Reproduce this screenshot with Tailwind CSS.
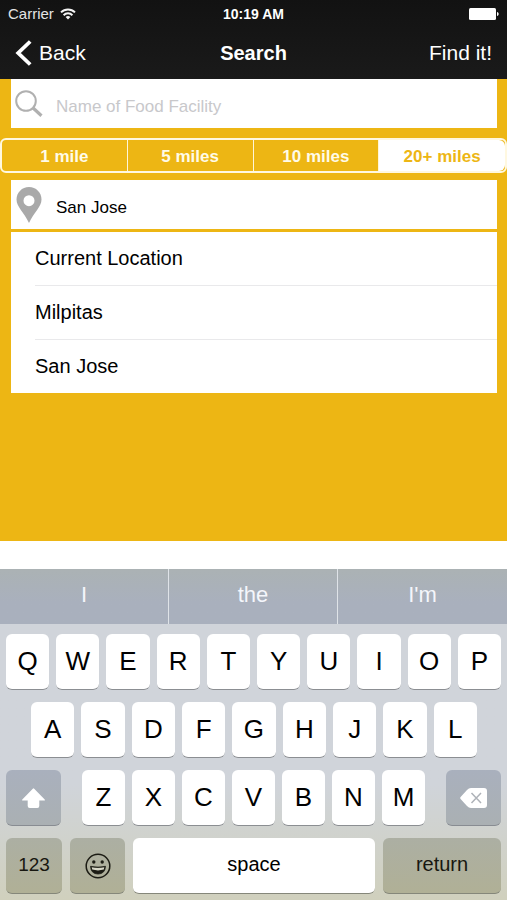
<!DOCTYPE html>
<html lang="en">
<head>
<meta charset="utf-8">
<meta name="viewport" content="width=device-width, initial-scale=1">
<title>Search</title>
<script src="https://cdn.jsdelivr.net/npm/@tailwindcss/browser@4"></script>
</head>
<body class="flex min-h-screen flex-col bg-white font-['Liberation_Sans',Arial,sans-serif] text-black">

<header class="bg-linear-to-b from-[#121212] to-[#1a1a1a] text-white">
  <div class="grid h-7 grid-cols-3 items-center px-2">
    <div class="flex items-center gap-1.5 text-[15px] text-[#e4e4e4]">
      <span>Carrier</span>
      <svg class="h-3 w-4" viewBox="0 0 16 12" fill="none" stroke="#f4f4f4" stroke-width="2" aria-hidden="true">
        <path d="M1 4.4a10 10 0 0 1 14 0"/><path d="M3.6 7.2a6.2 6.2 0 0 1 8.8 0"/><path d="M8 11.6 5.6 9.1a3.4 3.4 0 0 1 4.8 0z" fill="#f4f4f4" stroke="none"/>
      </svg>
    </div>
    <div class="text-center text-sm font-bold">10:19 AM</div>
    <svg class="h-3 w-[30px] justify-self-end" viewBox="0 0 30 12" fill="#fff" aria-label="Battery full">
      <rect width="27" height="12" rx="1.5"/><path d="M28 4c2.2.4 2.2 3.6 0 4z"/>
    </svg>
  </div>
  <nav class="grid grid-cols-3 items-center px-[15px] pt-[5px] pb-1.5 leading-10">
    <button class="flex items-center gap-[7px] text-[21px]">
      <svg class="h-[26px] w-[17px]" viewBox="0 0 17 26" fill="none" stroke="#fff" stroke-width="3.8" aria-hidden="true"><path d="M15.2 1.5 3.2 13l12 11.5"/></svg>
      Back
    </button>
    <h1 class="text-center text-xl leading-10 font-bold">Search</h1>
    <button class="justify-self-end text-[21px]">Find it!</button>
  </nav>
</header>

<main class="flex-1 bg-[#edb614]">
  <label class="mx-[10px] ml-[11px] flex h-[49px] items-center gap-3 bg-white pl-1">
    <svg class="size-7 shrink-0" viewBox="0 0 28 28" fill="none" stroke="#b0b0b0" aria-hidden="true"><circle cx="11" cy="11" r="9.8" stroke-width="2"/><path d="m17.8 17.8 8.700 8" stroke-width="3.2"/></svg>
    <input type="text" aria-label="Name of Food Facility" placeholder="Name of Food Facility" class="mt-1.5 min-w-0 flex-1 pl-px text-[17px] outline-none placeholder:text-[#c8c8cb]">
  </label>

  <fieldset aria-label="Distance" class="mt-[10px] grid h-[35px] grid-cols-4 divide-x divide-[#fff6d8] overflow-hidden rounded-md border-2 border-[#fff8e0] text-center text-[17px] leading-[33px] font-bold text-[#fffbe8]">
    <label class="has-checked:bg-white has-checked:text-[#edb614]"><input type="radio" name="distance" class="absolute appearance-none">1 mile</label>
    <label class="has-checked:bg-white has-checked:text-[#edb614]"><input type="radio" name="distance" class="absolute appearance-none">5 miles</label>
    <label class="has-checked:bg-white has-checked:text-[#edb614]"><input type="radio" name="distance" class="absolute appearance-none">10 miles</label>
    <label class="has-checked:bg-white has-checked:text-[#edb614]"><input type="radio" name="distance" class="absolute appearance-none" checked>20+ miles</label>
  </fieldset>

  <label class="mt-[7px] mr-[10px] ml-[11px] flex h-[49px] items-center gap-3 bg-white pl-1">
    <svg class="h-9 w-7 shrink-0" viewBox="0 0 28 36" aria-hidden="true"><path fill="#a9a9a9" fill-rule="evenodd" d="M14 0C7 0 1.500 5.500 1.500 12.500 1.500 20 9 25 14 36 19 25 26.500 20 26.500 12.500 26.500 5.500 21 0 14 0zM14 8.200a5.500 5.500 0 1 1 0 11 5.500 5.500 0 0 1 0-11z"/></svg>
    <input type="text" aria-label="Location" value="San Jose" class="mt-1.5 min-w-0 flex-1 pl-px text-[17px] outline-none">
  </label>

  <ul class="mt-[3px] mr-[10px] ml-[11px] bg-white pl-6 text-xl leading-[53px]">
    <li class="border-b border-[#e9e9eb]"><button class="w-full text-left">Current Location</button></li>
    <li class="border-b border-[#e9e9eb]"><button class="w-full text-left">Milpitas</button></li>
    <li><button class="w-full text-left">San Jose</button></li>
  </ul>
</main>

<div class="h-7 bg-white"></div>

<section aria-label="Keyboard" class="bg-linear-to-b from-[#d0d4da] from-65% to-[#d0d0bd]">
  <div class="grid h-[55px] grid-cols-3 divide-x divide-[#dfe3e8] bg-linear-to-b from-[#abb2b4] to-[#a9b0bd] to-60% text-[22px] text-[#f4f6fb]">
    <button class="pb-1">I</button><button class="pb-1">the</button><button class="pb-1">I'm</button>
  </div>
  <div class="flex flex-col gap-3 px-1.5 pt-[10px] pb-1.5 text-[26px]">
    <div class="flex h-14 gap-[7px]">
      <button class="flex-1 rounded-md border-b border-[#8b8e92] bg-white">Q</button>
      <button class="flex-1 rounded-md border-b border-[#8b8e92] bg-white">W</button>
      <button class="flex-1 rounded-md border-b border-[#8b8e92] bg-white">E</button>
      <button class="flex-1 rounded-md border-b border-[#8b8e92] bg-white">R</button>
      <button class="flex-1 rounded-md border-b border-[#8b8e92] bg-white">T</button>
      <button class="flex-1 rounded-md border-b border-[#8b8e92] bg-white">Y</button>
      <button class="flex-1 rounded-md border-b border-[#8b8e92] bg-white">U</button>
      <button class="flex-1 rounded-md border-b border-[#8b8e92] bg-white">I</button>
      <button class="flex-1 rounded-md border-b border-[#8b8e92] bg-white">O</button>
      <button class="flex-1 rounded-md border-b border-[#8b8e92] bg-white">P</button>
    </div>
    <div class="flex h-14 gap-[7px] pr-6 pl-[25px]">
      <button class="flex-1 rounded-md border-b border-[#8b8e92] bg-white">A</button>
      <button class="flex-1 rounded-md border-b border-[#8b8e92] bg-white">S</button>
      <button class="flex-1 rounded-md border-b border-[#8b8e92] bg-white">D</button>
      <button class="flex-1 rounded-md border-b border-[#8b8e92] bg-white">F</button>
      <button class="flex-1 rounded-md border-b border-[#8b8e92] bg-white">G</button>
      <button class="flex-1 rounded-md border-b border-[#8b8e92] bg-white">H</button>
      <button class="flex-1 rounded-md border-b border-[#8b8e92] bg-white">J</button>
      <button class="flex-1 rounded-md border-b border-[#8b8e92] bg-white">K</button>
      <button class="flex-1 rounded-md border-b border-[#8b8e92] bg-white">L</button>
    </div>
    <div class="flex h-14 gap-[21px]">
      <button aria-label="Shift" class="flex w-[55px] items-center justify-center rounded-md border-b border-[#888c92] bg-linear-to-b from-[#a9b0bd] to-[#aab0b3]">
        <svg class="h-5 w-[23px]" viewBox="0 0 23 20" fill="#fff" aria-hidden="true"><path d="M10.800.7Q11.500 0 12.200.7L22.700 11.600Q23.300 12.600 22.200 12.600H17.300V18Q17.300 20 15.300 20H7.700Q5.700 20 5.700 18V12.600H.8Q-.3 12.600.3 11.600z"/></svg>
      </button>
      <div class="flex flex-1 gap-[7px]">
        <button class="flex-1 rounded-md border-b border-[#8b8e92] bg-white">Z</button>
        <button class="flex-1 rounded-md border-b border-[#8b8e92] bg-white">X</button>
        <button class="flex-1 rounded-md border-b border-[#8b8e92] bg-white">C</button>
        <button class="flex-1 rounded-md border-b border-[#8b8e92] bg-white">V</button>
        <button class="flex-1 rounded-md border-b border-[#8b8e92] bg-white">B</button>
        <button class="flex-1 rounded-md border-b border-[#8b8e92] bg-white">N</button>
        <button class="flex-1 rounded-md border-b border-[#8b8e92] bg-white">M</button>
      </div>
      <button aria-label="Delete" class="flex w-[55px] items-center justify-center rounded-md border-b border-[#888c92] bg-linear-to-b from-[#a9b0bd] to-[#aab0b3]">
        <svg class="h-5 w-[27px]" viewBox="0 0 27 20" aria-hidden="true"><path fill="#fff" d="M.6 9 7 2Q8.800 0 11 0h13a3 3 0 0 1 3 3v14a3 3 0 0 1-3 3H11Q8.800 20 7 18L.6 11Q-.2 10 .6 9z"/><path d="m11.500 5 9.500 10m0-10-9.500 10" stroke="#aeb2b8" stroke-width="1.500"/></svg>
      </button>
    </div>
    <div class="flex h-14 gap-2 text-xl">
      <button class="w-14 rounded-md border-b border-[#85877a] bg-linear-to-b from-[#acafa3] to-[#b0b096] text-[19px] text-[#171710]">123</button>
      <button aria-label="Emoji" class="flex w-[55px] items-center justify-center rounded-md border-b border-[#85877a] bg-linear-to-b from-[#acafa3] to-[#b0b096]">
        <svg class="size-[26px]" viewBox="0 0 26 26" fill="none" stroke="#1c1c14" aria-hidden="true"><circle cx="13" cy="13" r="11.800" stroke-width="1.500"/><circle cx="8.800" cy="9" r="1.700" fill="#1c1c14" stroke="none"/><circle cx="17.200" cy="9" r="1.700" fill="#1c1c14" stroke="none"/><path d="M5.500 13.300Q13 15 20.500 13.300 20 21 13 21 6 21 5.500 13.300z" fill="#1c1c14" stroke-width=".8"/><path d="M6.700 14.300Q13 15.700 19.300 14.300L18.800 16.600Q13 18.200 7.200 16.600z" fill="#d6d6c6" stroke="none"/></svg>
      </button>
      <button class="flex-1 rounded-md border-b border-[#85877a] bg-white pb-1">space</button>
      <button class="w-[118px] rounded-md border-b border-[#85877a] bg-linear-to-b from-[#acafa3] to-[#b0b096] pb-1 text-[#171710]">return</button>
    </div>
  </div>
</section>
</body>
</html>
